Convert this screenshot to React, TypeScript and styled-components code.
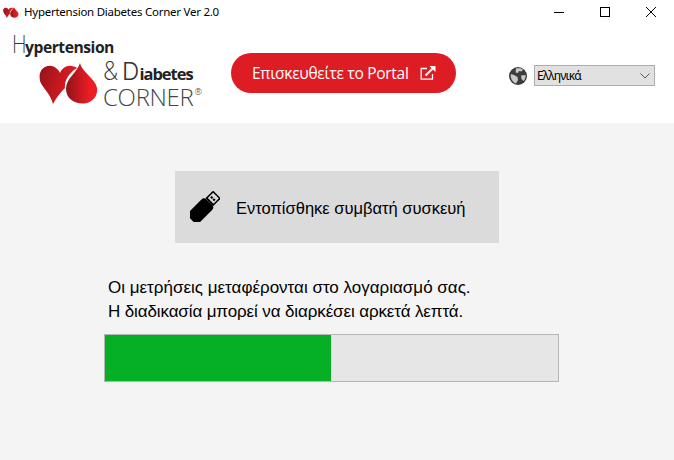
import React from "react";
import styled, { createGlobalStyle } from "styled-components";

const Global = createGlobalStyle`
  html, body { margin: 0; padding: 0; width: 674px; height: 460px; overflow: hidden; background: #f4f4f4; }
  * { box-sizing: border-box; }
`;
const Page = styled.div`
  width: 674px; height: 460px; display: flex; flex-direction: column; background: #f4f4f4;
`;
const TitleBar = styled.div`
  height: 24px; background: #fff; display: flex; align-items: center; padding-left: 3px;
`;
const TitleText = styled.span`
  margin-left: 5px; font: 11.5px "Noto Sans", "Open Sans", sans-serif; color: #000; flex: 1; letter-spacing: -0.25px; position: relative; top: -1px;
`;
const WinButton = styled.div`
  width: 46px; height: 24px; display: flex; align-items: center; justify-content: center;
`;
const Header = styled.header`
  height: 99px; background: #fff; display: flex;
`;
const Logo = styled.div`
  width: 231px; padding: 10px 0 0 12px; display: flex; flex-direction: column; flex: none;
`;
const LogoTop = styled.div`
  display: flex; align-items: baseline; height: 22px; line-height: 22px;
`;
const LogoH = styled.span`
  font: 200 24px/22px "Inter", "Liberation Sans", sans-serif; color: #333; width: 13px; display: inline-block;
  transform: scaleX(.82); transform-origin: left;
`;
const LogoBold = styled.span`
  font: 700 16.5px/22px "Open Sans", sans-serif; color: #222; display: inline-block; transform: scaleX(.95); transform-origin: left; letter-spacing: -0.5px;
`;
const LogoBottom = styled.div`
  display: flex; margin: 7px 0 0 27px; gap: 4px;
`;
const LogoWords = styled.div`
  display: flex; flex-direction: column; margin-top: -5px;
`;
const LogoLine1 = styled.div`
  display: flex; align-items: baseline; height: 27px; color: #333;
`;
const Amp = styled.span`
  font: 200 25px/27px "Inter", sans-serif; color: #333; margin-right: 4px;
`;
const DLetter = styled.span`
  font: 300 24px/27px "Inter", sans-serif; color: #333;
`;
const LogoBoldSm = styled.span`
  font: 700 16.5px/27px "Open Sans", sans-serif; color: #222; letter-spacing: -1px;
`;
const Corner = styled.div`
  font: 300 24px/24px "Open Sans", "Inter", sans-serif; color: #444; letter-spacing: -0.3px; display: flex;
  sup { font-size: 9px; line-height: 14px; margin-left: 1px; letter-spacing: 0; }
`;
const PortalButton = styled.a`
  width: 225px; height: 40px; margin-top: 29px; border-radius: 20px; background: #dd1c24; color: #fff; display: flex; align-items: center;
  padding-left: 21px; font: 15.5px "Open Sans", "Noto Sans", sans-serif; flex: none; letter-spacing: -0.28px;
`;
const PortalIcon = styled.svg`
  margin-left: 11px; width: 16px; height: 16px; flex: none;
`;
const Lang = styled.div`
  display: flex; align-items: center; margin: 41px 0 0 53px; height: 21px; 
`;
const Globe = styled.svg`
  width: 18px; height: 18px; flex: none; margin-right: 7px;
`;
const Select = styled.div`
  width: 121px; height: 21px; background: #e1e1e1; border: 1px solid #adadad; display: flex; align-items: center; justify-content: space-between;
  padding: 0 4px 0 2px; font: 12px "Noto Sans", "Open Sans", sans-serif; color: #000; letter-spacing: -0.8px;
`;
const Main = styled.main`
  flex: 1; padding-top: 48px; display: flex; flex-direction: column; align-items: flex-start;
`;
const DeviceCard = styled.div`
  width: 324px; height: 72px; margin-left: 175px; background: #dbdbdb; display: flex; align-items: center; padding-left: 15px;
`;
const UsbIcon = styled.svg`
  width: 30px; height: 31px; flex: none; margin-right: 16px; position: relative; top: -1px;
`;
const DeviceText = styled.span`
  font: 16.5px "Liberation Sans", Arial, sans-serif; color: #000; position: relative; top: 1px;
`;
const Message = styled.div`
  margin: 33px 0 0 108px; font: 17px/24px "Liberation Sans", Arial, sans-serif; color: #000;
`;
const MessageLine = styled.div<{ $spacing?: number }>`
  letter-spacing: ${(p) => p.$spacing ?? 0}px;
`;
const Progress = styled.div`
  width: 455px; height: 48px; margin: 10px 0 0 104px; background: #e6e6e6; border: 1px solid #b5b5b5;
`;
const Fill = styled.div`
  height: 100%; background: #06b025;
`;

const LogoMark = ({ width, height, id }: { width: number; height: number; id: string }) => (
  <svg width={width} height={height} viewBox="0 0 60 41" style={{ flex: "none" }}>
    <defs>
      <linearGradient id={id + "a"} x1="0" x2="1" y1="0.2" y2="0.5">
        <stop offset="0" stopColor="#98141b" />
        <stop offset="1" stopColor="#ee1c25" />
      </linearGradient>
      <linearGradient id={id + "b"} x1="0" x2="1" y1="0.5" y2="0.5">
        <stop offset="0" stopColor="#8f1319" />
        <stop offset="0.75" stopColor="#ed1c24" />
        <stop offset="1" stopColor="#ee1c25" />
      </linearGradient>
    </defs>
    <path
      d="M14 41 C12 33 7 28 3 22 C-1 16 0 7 6 4 C12 1 18 4 21 10 C23 5 28 2 33 3 C35 3.500 37 4 38 5 C30 10 25 18 26 25 C21 30 17 35 14 41Z"
      fill={`url(#${id}a)`}
    />
    <path
      d="M41 0 C42 7 52 13 56 20 C61 28 57 39 45 40.500 C35 41 27 35 27 26 C27 15 38 10 41 0Z"
      fill={`url(#${id}b)`}
    />
  </svg>
);

export default function App() {
  return (
    <Page>
      <Global />
      <TitleBar>
        <LogoMark width={16} height={11} id="t" />
        <TitleText>Hypertension Diabetes Corner Ver 2.0</TitleText>
        <WinButton>
          <svg width="10" height="10" viewBox="0 0 10 10"><path d="M0 5.500H10" stroke="#000" /></svg>
        </WinButton>
        <WinButton>
          <svg width="10" height="10" viewBox="0 0 10 10"><rect x=".5" y=".5" width="9" height="9" fill="none" stroke="#000" /></svg>
        </WinButton>
        <WinButton>
          <svg width="10" height="10" viewBox="0 0 10 10"><path d="M0 0L10 10M10 0L0 10" stroke="#000" strokeWidth="1" /></svg>
        </WinButton>
      </TitleBar>
      <Header>
        <Logo>
          <LogoTop>
            <LogoH>H</LogoH>
            <LogoBold>ypertension</LogoBold>
          </LogoTop>
          <LogoBottom>
            <LogoMark width={60} height={41} id="l" />
            <LogoWords>
              <LogoLine1>
                <Amp>&amp;</Amp>
                <DLetter>D</DLetter>
                <LogoBoldSm>iabetes</LogoBoldSm>
              </LogoLine1>
              <Corner>CORNER<sup>®</sup></Corner>
            </LogoWords>
          </LogoBottom>
        </Logo>
        <PortalButton>
          Επισκευθείτε το Portal
          <PortalIcon viewBox="0 0 16 16" fill="none">
            <path d="M12.500 9V14.200H1.200V3.500H7" stroke="#fff" strokeWidth="1.300" />
            <path d="M5.500 10.500L14 2.200" stroke="#fff" strokeWidth="2" />
            <path d="M9.500 1H15.500V7Z" fill="#fff" />
          </PortalIcon>
        </PortalButton>
        <Lang>
          <Globe viewBox="0 0 18 18">
            <circle cx="9" cy="9" r="9" fill="#3c3c3c" />
            <path d="M7 1.500C9 1 12 1 14 2.500L12.500 4.500L10 4L9 6L6.500 5.500ZM2 7L5 8L8.500 10L9 13L7 16.500C4 15.500 1.800 12 1.700 9ZM12 8.500L16.500 8C16.800 10 16 12.500 14.500 14L12.500 12Z" fill="#c9c9c9" />
          </Globe>
          <Select>
            Ελληνικά
            <svg width="10" height="6" viewBox="0 0 10 6" fill="none"><path d="M.5 .5L5 5L9.500 .5" stroke="#555" /></svg>
          </Select>
        </Lang>
      </Header>
      <Main>
        <DeviceCard>
          <UsbIcon viewBox="0 0 30 31">
            <g transform="rotate(-45 15 15.500)">
              <rect x="-4" y="8" width="25" height="15" rx="3.500" fill="#000" />
              <path d="M21 10H32V21H21Z" fill="#000" />
              <rect x="23" y="11.500" width="7.500" height="8" fill="#dbdbdb" />
              <rect x="25" y="12.800" width="2.200" height="2.200" fill="#000" />
              <rect x="25" y="16" width="2.200" height="2.200" fill="#000" />
            </g>
          </UsbIcon>
          <DeviceText>Εντοπίσθηκε συμβατή συσκευή</DeviceText>
        </DeviceCard>
        <Message>
          <MessageLine>Οι μετρήσεις μεταφέρονται στο λογαριασμό σας.</MessageLine>
          <MessageLine $spacing={-0.12}>Η διαδικασία μπορεί να διαρκέσει αρκετά λεπτά.</MessageLine>
        </Message>
        <Progress>
          <Fill style={{ width: `${(226 / 453) * 100}%` }} />
        </Progress>
      </Main>
    </Page>
  );
}
